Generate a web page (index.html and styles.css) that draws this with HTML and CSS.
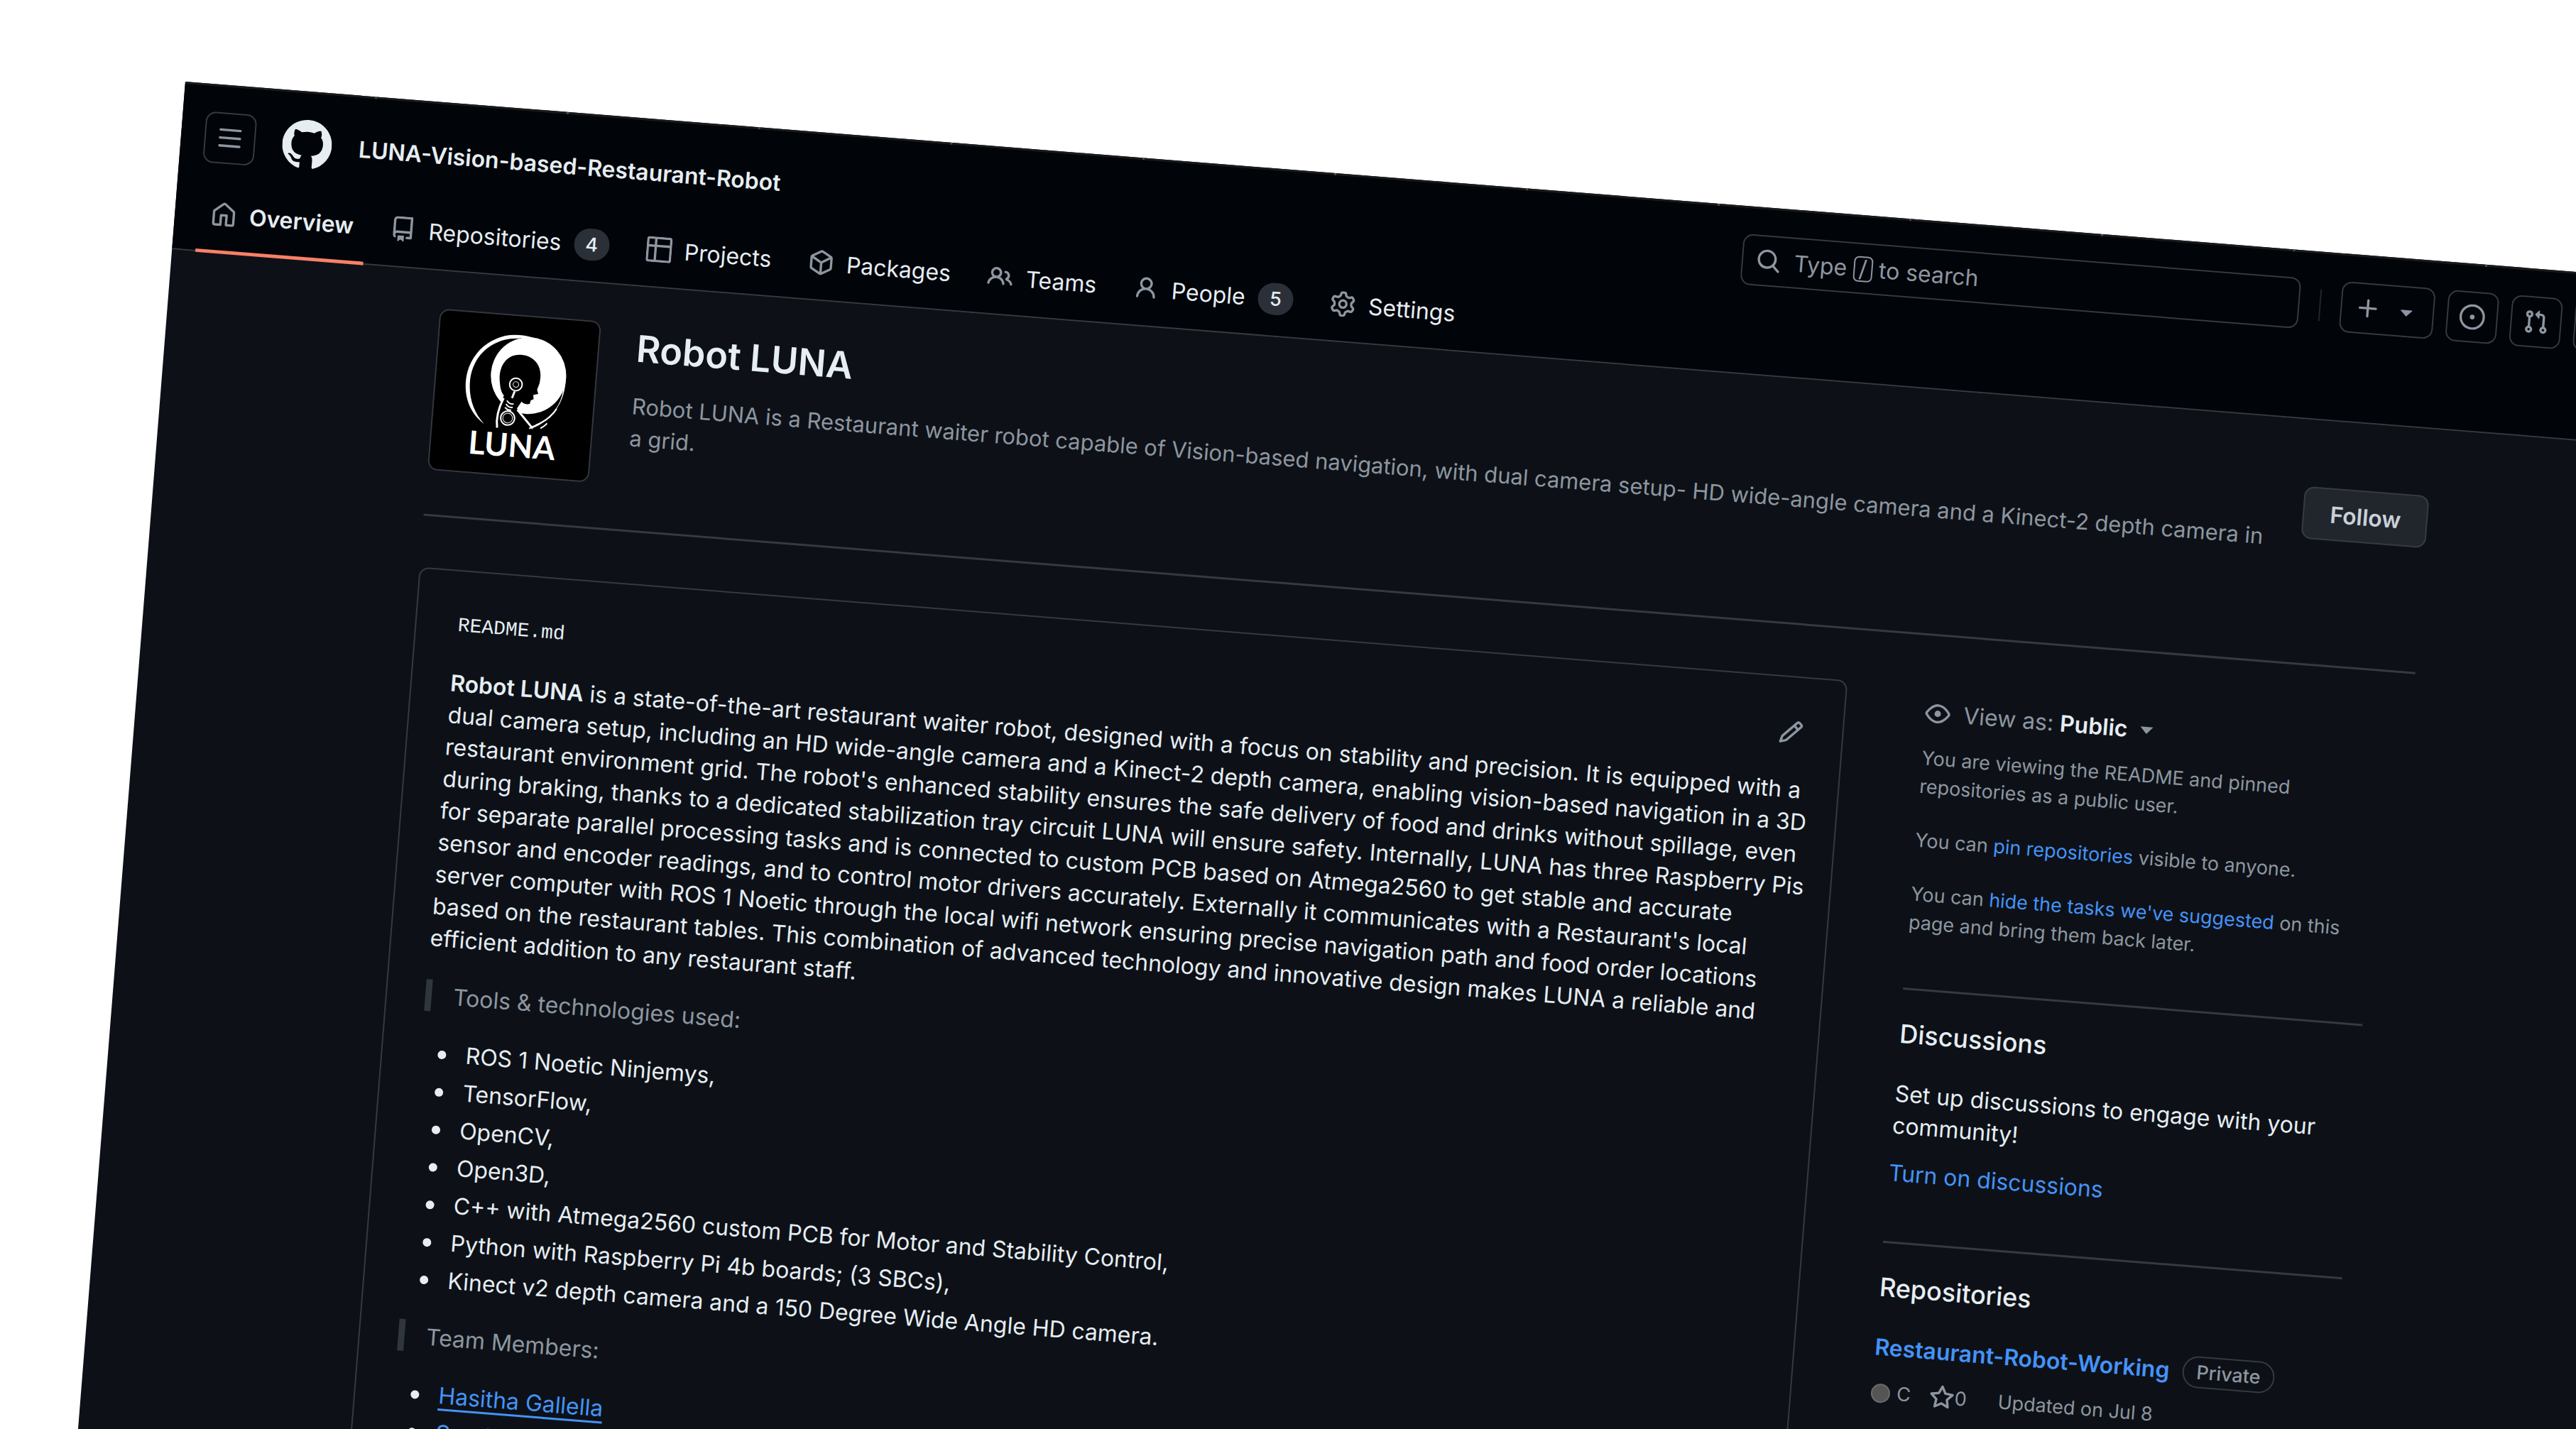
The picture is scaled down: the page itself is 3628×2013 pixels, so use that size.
FILE: index.html
```html
<!DOCTYPE html>
<html lang="en">

<head>
    <meta charset="UTF-8" />
    <meta name="viewport" content="width=device-width, initial-scale=1.0" />
    <title>Robot LUNA</title>
    <link rel="stylesheet" href="styles.css">
</head>

<body>
    <div class="page">
        <div class="page-edge"></div>

        <header class="header">
            <div class="header-top">
                <button class="icon-btn" type="button" aria-label="Open menu">
                    <svg class="icon" viewBox="0 0 16 16"><path d="M1 2.75A.75.75 0 0 1 1.75 2h12.5a.75.75 0 0 1 0 1.5H1.75A.75.75 0 0 1 1 2.75Zm0 5A.75.75 0 0 1 1.75 7h12.5a.75.75 0 0 1 0 1.5H1.75A.75.75 0 0 1 1 7.75ZM1.75 12h12.5a.75.75 0 0 1 0 1.5H1.75a.75.75 0 0 1 0-1.5Z"/></svg>
                </button>
                <a class="logo" href="#" aria-label="Homepage">
                    <svg viewBox="0 0 16 16"><path d="M8 0c4.42 0 8 3.58 8 8a8.013 8.013 0 0 1-5.45 7.59c-.4.08-.55-.17-.55-.38 0-.27.01-1.13.01-2.2 0-.75-.25-1.23-.54-1.48 1.78-.2 3.65-.88 3.65-3.95 0-.88-.31-1.59-.82-2.15.08-.2.36-1.02-.08-2.12 0 0-.67-.22-2.2.82-.64-.18-1.32-.27-2-.27-.68 0-1.36.09-2 .27-1.53-1.03-2.2-.82-2.2-.82-.44 1.1-.16 1.92-.08 2.12-.51.56-.82 1.28-.82 2.15 0 3.06 1.86 3.75 3.64 3.95-.23.2-.44.55-.51 1.07-.46.21-1.61.55-2.33-.66-.15-.24-.6-.83-1.23-.82-.67.01-.27.38.01.53.34.19.73.9.82 1.13.16.45.68 1.31 2.69.94 0 .67.01 1.3.01 1.49 0 .21-.15.45-.55.38A7.995 7.995 0 0 1 0 8c0-4.42 3.58-8 8-8Z"/></svg>
                </a>
                <a class="org-name" href="#">LUNA-Vision-based-Restaurant-Robot</a>

                <button class="search" type="button">
                    <svg class="icon" viewBox="0 0 16 16"><path d="M10.68 11.74a6 6 0 0 1-7.922-8.982 6 6 0 0 1 8.982 7.922l3.04 3.04a.749.749 0 0 1-.326 1.275.749.749 0 0 1-.734-.215ZM11.5 7a4.499 4.499 0 1 0-8.997 0A4.499 4.499 0 0 0 11.5 7Z"/></svg>
                    <span>Type <kbd>/</kbd> to search</span>
                </button>
                <span class="divider"></span>
                <div class="header-actions">
                    <button class="icon-btn create-btn" type="button" aria-label="Create new">
                        <svg class="icon" viewBox="0 0 16 16"><path d="M7.75 2a.75.75 0 0 1 .75.75V7h4.25a.75.75 0 0 1 0 1.5H8.5v4.25a.75.75 0 0 1-1.5 0V8.5H2.75a.75.75 0 0 1 0-1.5H7V2.75A.75.75 0 0 1 7.75 2Z"/></svg>
                        <svg class="icon" viewBox="0 0 16 16"><path d="m4.427 7.427 3.396 3.396a.25.25 0 0 0 .354 0l3.396-3.396A.25.25 0 0 0 11.396 7H4.604a.25.25 0 0 0-.177.427Z"/></svg>
                    </button>
                    <button class="icon-btn" type="button" aria-label="Issues">
                        <svg class="icon" viewBox="0 0 16 16"><path d="M8 9.5a1.5 1.5 0 1 0 0-3 1.5 1.5 0 0 0 0 3Z"/><path d="M8 0a8 8 0 1 1 0 16A8 8 0 0 1 8 0ZM1.5 8a6.5 6.5 0 1 0 13 0 6.5 6.5 0 0 0-13 0Z"/></svg>
                    </button>
                    <button class="icon-btn" type="button" aria-label="Pull requests">
                        <svg class="icon" viewBox="0 0 16 16"><path d="M1.5 3.25a2.25 2.25 0 1 1 3 2.122v5.256a2.251 2.251 0 1 1-1.5 0V5.372A2.25 2.25 0 0 1 1.5 3.25Zm5.677-.177L9.573.677A.25.25 0 0 1 10 .854V2.5h1A2.5 2.5 0 0 1 13.5 5v5.628a2.251 2.251 0 1 1-1.5 0V5a1 1 0 0 0-1-1h-1v1.646a.25.25 0 0 1-.427.177L7.177 3.427a.25.25 0 0 1 0-.354ZM3.75 2.5a.75.75 0 1 0 0 1.5.75.75 0 0 0 0-1.5Zm0 9.5a.75.75 0 1 0 0 1.5.75.75 0 0 0 0-1.5Zm8.25.75a.75.75 0 1 0 1.5 0 .75.75 0 0 0-1.5 0Z"/></svg>
                    </button>
                    <button class="icon-btn" type="button" aria-label="Notifications">
                        <svg class="icon" viewBox="0 0 16 16"><path d="M2.8 2.06A1.75 1.75 0 0 1 4.41 1h7.18c.7 0 1.333.417 1.61 1.06l2.74 6.395c.04.093.06.194.06.295v4.5A1.75 1.75 0 0 1 14.25 15H1.75A1.75 1.75 0 0 1 0 13.25v-4.5c0-.101.02-.202.06-.295Zm1.61.44a.25.25 0 0 0-.23.152L1.887 8H4.75a.75.75 0 0 1 .6.3L6.625 10h2.75l1.275-1.7a.75.75 0 0 1 .6-.3h2.863L11.82 2.652a.25.25 0 0 0-.23-.152Z"/></svg>
                    </button>
                    <a class="user" href="#" aria-label="Your profile"></a>
                </div>
            </div>

            <nav class="nav">
                <a class="nav-item active" href="#">
                    <svg class="icon" viewBox="0 0 16 16"><path d="M6.906.664a1.749 1.749 0 0 1 2.187 0l5.25 4.2c.415.332.657.835.657 1.367v7.019A1.75 1.75 0 0 1 13.25 15h-3.5a.75.75 0 0 1-.75-.75V9H7v5.25a.75.75 0 0 1-.75.75h-3.5A1.75 1.75 0 0 1 1 13.25V6.23c0-.531.242-1.034.657-1.366l5.25-4.2Zm1.25 1.171a.25.25 0 0 0-.312 0l-5.25 4.2a.25.25 0 0 0-.094.196v7.019c0 .138.112.25.25.25H5.5V8.25a.75.75 0 0 1 .75-.75h3.5a.75.75 0 0 1 .75.75v5.25h2.75a.25.25 0 0 0 .25-.25V6.23a.25.25 0 0 0-.094-.195Z"/></svg>
                    Overview
                </a>
                <a class="nav-item" href="#">
                    <svg class="icon" viewBox="0 0 16 16"><path d="M2 2.5A2.5 2.5 0 0 1 4.5 0h8.75a.75.75 0 0 1 .75.75v12.5a.75.75 0 0 1-.75.75h-2.5a.75.75 0 0 1 0-1.5h1.75v-2h-8a1 1 0 0 0-.714 1.7.75.75 0 1 1-1.072 1.05A2.495 2.495 0 0 1 2 11.5Zm10.5-1h-8a1 1 0 0 0-1 1v6.708A2.486 2.486 0 0 1 4.5 9h8ZM5 12.25a.25.25 0 0 1 .25-.25h3.5a.25.25 0 0 1 .25.25v3.25a.25.25 0 0 1-.4.2l-1.45-1.087a.249.249 0 0 0-.3 0L5.4 15.7a.25.25 0 0 1-.4-.2Z"/></svg>
                    Repositories
                    <span class="counter">4</span>
                </a>
                <a class="nav-item" href="#">
                    <svg class="icon" viewBox="0 0 16 16"><path d="M0 1.75C0 .784.784 0 1.75 0h12.5C15.216 0 16 .784 16 1.75v12.5A1.75 1.75 0 0 1 14.25 16H1.75A1.75 1.75 0 0 1 0 14.25ZM6.5 6.5v8h7.75a.25.25 0 0 0 .25-.25V6.5Zm8-1.5V1.75a.25.25 0 0 0-.25-.25H6.5V5Zm-13 1.5v7.75c0 .138.112.25.25.25H5v-8ZM5 5V1.5H1.75a.25.25 0 0 0-.25.25V5Z"/></svg>
                    Projects
                </a>
                <a class="nav-item" href="#">
                    <svg class="icon" viewBox="0 0 16 16"><path d="m8.878.392 5.25 3.045c.54.314.872.89.872 1.514v6.098a1.75 1.75 0 0 1-.872 1.514l-5.25 3.045a1.75 1.75 0 0 1-1.756 0l-5.25-3.045A1.75 1.75 0 0 1 1 11.049V4.951c0-.624.332-1.201.872-1.514L7.122.392a1.75 1.75 0 0 1 1.756 0ZM7.875 1.69l-4.63 2.685L8 7.133l4.755-2.758-4.63-2.685a.248.248 0 0 0-.25 0ZM2.5 5.677v5.372c0 .09.047.171.125.216l4.625 2.683V8.432Zm6.25 8.271 4.625-2.683a.25.25 0 0 0 .125-.216V5.677L8.75 8.432Z"/></svg>
                    Packages
                </a>
                <a class="nav-item" href="#">
                    <svg class="icon" viewBox="0 0 16 16"><path d="M2 5.5a3.5 3.5 0 1 1 5.898 2.549 5.508 5.508 0 0 1 3.034 4.084.75.75 0 1 1-1.482.235 4 4 0 0 0-7.9 0 .75.75 0 0 1-1.482-.236A5.507 5.507 0 0 1 3.102 8.05 3.493 3.493 0 0 1 2 5.5ZM11 4a3.001 3.001 0 0 1 2.22 5.018 5.01 5.01 0 0 1 2.56 3.012.749.749 0 0 1-.885.954.752.752 0 0 1-.549-.514 3.507 3.507 0 0 0-2.522-2.372.75.75 0 0 1-.574-.73v-.352a.75.75 0 0 1 .416-.672A1.5 1.5 0 0 0 11 5.5.75.75 0 0 1 11 4Zm-5.5-.5a2 2 0 1 0-.001 3.999A2 2 0 0 0 5.5 3.5Z"/></svg>
                    Teams
                </a>
                <a class="nav-item" href="#">
                    <svg class="icon" viewBox="0 0 16 16"><path d="M10.561 8.073a6.005 6.005 0 0 1 3.432 5.142.75.75 0 1 1-1.498.07 4.5 4.5 0 0 0-8.99 0 .75.75 0 0 1-1.498-.07 6.004 6.004 0 0 1 3.431-5.142 3.999 3.999 0 1 1 5.123 0ZM10.5 5a2.5 2.5 0 1 0-5 0 2.5 2.5 0 0 0 5 0Z"/></svg>
                    People
                    <span class="counter">5</span>
                </a>
                <a class="nav-item" href="#">
                    <svg class="icon" viewBox="0 0 16 16"><path d="M8 0a8.2 8.2 0 0 1 .701.031C9.444.095 9.99.645 10.16 1.29l.288 1.107c.018.066.079.158.212.224.231.114.454.243.668.386.123.082.233.09.299.071l1.103-.303c.644-.176 1.392.021 1.82.63.27.385.506.792.704 1.218.315.675.111 1.422-.364 1.891l-.814.806c-.049.048-.098.147-.088.294.016.257.016.515 0 .772-.01.147.038.246.088.294l.814.806c.475.469.679 1.216.364 1.891a7.977 7.977 0 0 1-.704 1.217c-.428.61-1.176.807-1.82.63l-1.102-.302c-.067-.019-.177-.011-.3.071a5.909 5.909 0 0 1-.668.386c-.133.066-.194.158-.211.224l-.29 1.106c-.168.646-.715 1.196-1.458 1.26a8.006 8.006 0 0 1-1.402 0c-.743-.064-1.289-.614-1.458-1.26l-.289-1.106c-.018-.066-.079-.158-.212-.224a5.738 5.738 0 0 1-.668-.386c-.123-.082-.233-.09-.299-.071l-1.103.303c-.644.176-1.392-.021-1.82-.63a8.12 8.12 0 0 1-.704-1.218c-.315-.675-.111-1.422.363-1.891l.815-.806c.05-.048.098-.147.088-.294a6.214 6.214 0 0 1 0-.772c.01-.147-.038-.246-.088-.294l-.815-.806C.635 6.045.431 5.298.746 4.623a7.92 7.92 0 0 1 .704-1.217c.428-.61 1.176-.807 1.82-.63l1.102.302c.067.019.177.011.3-.071.214-.143.437-.272.668-.386.133-.066.194-.158.211-.224l.29-1.106C6.009.645 6.556.095 7.299.03 7.53.01 7.764 0 8 0Zm-.571 1.525c-.036.003-.108.036-.137.146l-.289 1.105c-.147.561-.549.967-.998 1.189-.173.086-.34.183-.5.29-.417.278-.97.423-1.529.27l-1.103-.303c-.109-.03-.175.016-.195.045-.22.312-.412.644-.573.99-.014.031-.021.11.059.19l.815.806c.411.406.562.957.53 1.456a4.709 4.709 0 0 0 0 .582c.032.499-.119 1.05-.53 1.456l-.815.806c-.081.08-.073.159-.059.19.162.346.353.677.573.989.02.03.085.076.195.046l1.102-.303c.56-.153 1.113-.008 1.53.27.161.107.328.204.501.29.447.222.85.629.997 1.189l.289 1.105c.029.109.101.143.137.146a6.6 6.6 0 0 0 1.142 0c.036-.003.108-.036.137-.146l.289-1.105c.147-.561.549-.967.998-1.189.173-.086.34-.183.5-.29.417-.278.97-.423 1.529-.27l1.103.303c.109.029.175-.016.195-.045.22-.313.411-.644.573-.99.014-.031.021-.11-.059-.19l-.815-.806c-.411-.406-.562-.957-.53-1.456a4.709 4.709 0 0 0 0-.582c-.032-.499.119-1.05.53-1.456l.815-.806c.081-.08.073-.159.059-.19a6.464 6.464 0 0 0-.573-.989c-.02-.03-.085-.076-.195-.046l-1.102.303c-.56.153-1.113.008-1.53-.27a4.44 4.44 0 0 0-.501-.29c-.447-.222-.85-.629-.997-1.189l-.289-1.105c-.029-.11-.101-.143-.137-.146a6.6 6.6 0 0 0-1.142 0ZM11 8a3 3 0 1 1-6 0 3 3 0 0 1 6 0ZM9.5 8a1.5 1.5 0 1 0-3.001.001A1.5 1.5 0 0 0 9.5 8Z"/></svg>
                    Settings
                </a>
            </nav>
        </header>

        <main class="container">
            <section class="profile">
                <svg class="avatar" viewBox="0 0 228 228" role="img" aria-label="Robot LUNA">
                    <rect width="228" height="228" fill="#000"/>
                    <!-- outer ring and moon -->
                    <path fill="#fff" d="M74 158C52 144 43 122 43 99a71 72 0 0 1 72-72c14 0 24 3 34 8a56 56 0 0 0-36-3C76 34 49 62 49 99c0 24 9 44 25 59Z"/>
                    <ellipse cx="132" cy="84" rx="54" ry="55" fill="#fff"/>
                    <path fill="#fff" d="M185 78c4 33-9 62-38 79l-14 6 9-7c22-9 39-28 41-54Z"/>
                    <path fill="#000" d="M181 112c-5 16-17 31-36 38l-4 2-3-8c19-5 34-14 43-32Z"/>
                    <path fill="none" stroke="#fff" stroke-width="2" d="M176 128c-6 12-16 20-28 26M164 150c-3 4-6 6-9 8"/>
                    <!-- head -->
                    <path fill="#000" d="M92 98c-5-23 6-43 27-43 20 0 32 15 30 34 0 7-3 11-3 15l2 5-7 2 1 6-4 2-1 5c-4 2-9 1-12-2l-8 14-22-3 4-18c-4-4-6-10-7-17Z"/>
                    <path fill="#000" d="M98 120 88 164h54l-26-36Z"/>
                    <g fill="none" stroke="#fff">
                        <circle cx="115" cy="98" r="9" stroke-width="2"/>
                        <circle cx="115" cy="98" r="4" stroke-width="1"/>
                        <path stroke-width="3" d="M114 108l-3 10M99 119c-6 14-9 28-6 43M120 134l24 25"/>
                        <path stroke-width="2" d="M104 122c3 4 7 5 10 4M103 127c3 4 7 5 10 4M102 132c3 3 6 4 9 3"/>
                        <circle cx="107" cy="147" r="10" stroke-width="2"/>
                        <circle cx="107" cy="147" r="7" stroke-width="1"/>
                    </g>
                    <text class="avatar-text" x="116" y="202" text-anchor="middle">LUNA</text>
                </svg>
                <div class="profile-text">
                    <h1>Robot LUNA</h1>
                    <p>Robot LUNA is a Restaurant waiter robot capable of Vision-based navigation, with dual camera setup- HD wide-angle camera and a Kinect-2 depth camera in a grid.</p>
                </div>
                <button class="follow" type="button">Follow</button>
            </section>

            <div class="columns">
                <article class="readme">
                    <div class="readme-bar">
                        <span class="file-name">README.md</span>
                        <a class="edit" href="#" aria-label="Edit README">
                            <svg class="icon" viewBox="0 0 16 16"><path d="M11.013 1.427a1.75 1.75 0 0 1 2.474 0l1.086 1.086a1.75 1.75 0 0 1 0 2.474l-8.61 8.61c-.21.21-.47.364-.756.445l-3.251.93a.75.75 0 0 1-.927-.928l.929-3.25c.081-.286.235-.547.445-.758l8.61-8.61Zm.176 4.823L9.75 4.81l-6.286 6.287a.253.253 0 0 0-.064.108l-.558 1.953 1.953-.558a.253.253 0 0 0 .108-.064Zm1.238-3.763a.25.25 0 0 0-.354 0L10.811 3.75l1.439 1.44 1.263-1.263a.25.25 0 0 0 0-.354Z"/></svg>
                        </a>
                    </div>
                    <p><strong>Robot LUNA</strong> is a state-of-the-art restaurant waiter robot, designed with a focus on stability and precision. It is equipped with a dual camera setup, including an HD wide-angle camera and a Kinect-2 depth camera, enabling vision-based navigation in a 3D restaurant environment grid. The robot's enhanced stability ensures the safe delivery of food and drinks without spillage, even during braking, thanks to a dedicated stabilization tray circuit LUNA will ensure safety. Internally, LUNA has three Raspberry Pis for separate parallel processing tasks and is connected to custom PCB based on Atmega2560 to get stable and accurate sensor and encoder readings, and to control motor drivers accurately. Externally it communicates with a Restaurant's local server computer with ROS 1 Noetic through the local wifi network ensuring precise navigation path and food order locations based on the restaurant tables. This combination of advanced technology and innovative design makes LUNA a reliable and efficient addition to any restaurant staff.</p>
                    <blockquote>Tools &amp; technologies used:</blockquote>
                    <ul>
                        <li>ROS 1 Noetic Ninjemys,</li>
                        <li>TensorFlow,</li>
                        <li>OpenCV,</li>
                        <li>Open3D,</li>
                        <li>C++ with Atmega2560 custom PCB for Motor and Stability Control,</li>
                        <li>Python with Raspberry Pi 4b boards; (3 SBCs),</li>
                        <li>Kinect v2 depth camera and a 150 Degree Wide Angle HD camera.</li>
                    </ul>
                    <blockquote>Team Members:</blockquote>
                    <ul>
                        <li><a href="#">Hasitha Gallella</a></li>
                        <li><a href="#">Sandaruwan</a></li>
                    </ul>
                </article>

                <aside class="sidebar">
                    <button class="view-as" type="button">
                        <svg class="icon" viewBox="0 0 16 16"><path d="M8 2c1.981 0 3.671.992 4.933 2.078 1.27 1.091 2.187 2.345 2.637 3.023a1.62 1.62 0 0 1 0 1.798c-.45.678-1.367 1.932-2.637 3.023C11.67 13.008 9.981 14 8 14c-1.981 0-3.671-.992-4.933-2.078C1.797 10.83.88 9.576.43 8.898a1.62 1.62 0 0 1 0-1.798c.45-.677 1.367-1.931 2.637-3.022C4.33 2.992 6.019 2 8 2ZM1.679 7.932a.12.12 0 0 0 0 .136c.411.622 1.241 1.75 2.366 2.717C5.176 11.758 6.527 12.5 8 12.5c1.473 0 2.825-.742 3.955-1.715 1.124-.967 1.954-2.096 2.366-2.717a.12.12 0 0 0 0-.136c-.412-.621-1.242-1.75-2.366-2.717C10.824 4.242 9.473 3.5 8 3.5c-1.473 0-2.825.742-3.955 1.715-1.124.967-1.954 2.096-2.366 2.717ZM8 10a2 2 0 1 1-.001-3.999A2 2 0 0 1 8 10Z"/></svg>
                        <span>View as: <strong>Public</strong></span>
                        <span class="caret"></span>
                    </button>
                    <div class="notes">
                        <p>You are viewing the README and pinned repositories as a public user.</p>
                        <p>You can <a href="#">pin repositories</a> visible to anyone.</p>
                        <p>You can <a href="#">hide the tasks we've suggested</a> on this page and bring them back later.</p>
                    </div>

                    <section class="block">
                        <h2>Discussions</h2>
                        <p>Set up discussions to engage with your community!</p>
                        <a class="block-link" href="#">Turn on discussions</a>
                    </section>

                    <section class="block">
                        <h2>Repositories</h2>
                        <div class="repo-title">
                            <a href="#">Restaurant-Robot-Working</a>
                            <span class="label">Private</span>
                        </div>
                        <div class="repo-meta">
                            <span class="lang"><span class="lang-dot"></span>C</span>
                            <a class="stars" href="#"><svg class="icon" viewBox="0 0 16 16"><path d="M8 .25a.75.75 0 0 1 .673.418l1.882 3.815 4.21.612a.75.75 0 0 1 .416 1.279l-3.046 2.97.719 4.192a.751.751 0 0 1-1.088.791L8 12.347l-3.766 1.98a.75.75 0 0 1-1.088-.79l.72-4.194L.818 6.374a.75.75 0 0 1 .416-1.28l4.21-.611L7.327.668A.75.75 0 0 1 8 .25Zm0 2.445L6.615 5.5a.75.75 0 0 1-.564.41l-3.097.45 2.24 2.184a.75.75 0 0 1 .216.664l-.528 3.084 2.769-1.456a.75.75 0 0 1 .698 0l2.77 1.456-.53-3.084a.75.75 0 0 1 .216-.664l2.24-2.183-3.096-.45a.75.75 0 0 1-.564-.41L8 2.694Z"/></svg>0</a>
                            <span>Updated on Jul 8</span>
                        </div>
                    </section>
                </aside>
            </div>
        </main>
    </div>
</body>

</html>
```

FILE: styles.css
```css
* {
    box-sizing: border-box;
}

html,
body {
    height: 100%;
}

body {
    margin: 0;
    background-color: #FFFFFF;
    overflow: hidden;
    font-family: Inter, "Open Sans", sans-serif;
    font-size: 32px;
    line-height: 45px;
    color: #E6EDF3;
}

h1,
h2,
p,
ul,
blockquote {
    margin: 0;
}

a {
    color: #4493F8;
    text-decoration: none;
}

button {
    font: inherit;
    color: inherit;
    background: none;
    border: 0;
    padding: 0;
    cursor: pointer;
}

strong {
    font-weight: 600;
}

.icon {
    display: block;
    flex: none;
    width: 36px;
    height: 36px;
    fill: #8D96A0;
}

/* the whole page is tilted around its top left corner */
.page {
    width: 98.7vw;
    min-height: 110vh;
    margin: 115px 0 0 261px;
    background-color: #0D1117;
    transform: rotate(4.55deg);
    transform-origin: 0 0;
}

.page-edge {
    height: 3px;
    background: repeating-linear-gradient(90deg, #1A1A1A 0, #1A1A1A 268px, #4A4A4A 268px, #4A4A4A 271px);
}

/* header */

.header {
    background-color: #010409;
    border-bottom: 2px solid #333A40;
    padding: 36px 38px 0 33px;
}

.header-top {
    display: flex;
    align-items: center;
}

.icon-btn {
    display: flex;
    align-items: center;
    justify-content: center;
    width: 72px;
    height: 72px;
    border: 2px solid #333A40;
    border-radius: 14px;
}

.logo {
    width: 70px;
    height: 70px;
    margin: 0 38px;
}

.logo svg {
    display: block;
    fill: #E6EDF3;
}

.org-name {
    flex: 1;
    color: #E6EDF3;
    font-weight: 600;
}

.search {
    display: flex;
    align-items: center;
    gap: 18px;
    width: 788px;
    height: 72px;
    padding: 0 18px;
    border: 2px solid #333A40;
    border-radius: 14px;
    color: #8D96A0;
}

.search kbd {
    display: inline-block;
    width: 27px;
    font: inherit;
    line-height: 32px;
    text-align: center;
    border: 2px solid #8D96A0;
    border-radius: 7px;
}

.divider {
    width: 2px;
    height: 45px;
    margin: 0 28px;
    background-color: #21262D;
}

.header-actions {
    display: flex;
    gap: 18px;
}

.create-btn {
    width: 132px;
    gap: 18px;
}

.user {
    width: 72px;
    height: 72px;
    border-radius: 50%;
    background-color: #30363D;
}

.nav {
    display: flex;
    gap: 16px;
    margin-top: 20px;
}

.nav-item {
    position: relative;
    display: flex;
    align-items: center;
    gap: 18px;
    height: 104px;
    padding: 0 18px;
    color: #E6EDF3;
}

.nav-item.active {
    font-weight: 600;
}

.nav-item.active::after {
    content: "";
    position: absolute;
    left: 0;
    right: 0;
    bottom: -3px;
    height: 5px;
    background-color: #F78166;
}

.counter {
    min-width: 50px;
    padding: 0 12px;
    border-radius: 24px;
    background-color: #2B3038;
    font-size: 27px;
    font-weight: 500;
    text-align: center;
}

/* profile */

.container {
    max-width: 2814px;
    margin: 0 auto;
    padding-top: 53px;
}

.profile {
    display: flex;
    align-items: flex-start;
    padding-bottom: 62px;
    border-bottom: 3px solid #333A40;
}

.avatar {
    flex: none;
    width: 228px;
    height: 228px;
    border: 2px solid #33373D;
    border-radius: 14px;
}

.avatar-text {
    fill: #FFFFFF;
    font-family: Lato, sans-serif;
    font-size: 46px;
    font-weight: 700;
}

.profile-text {
    flex: 1;
    margin: 5px 45px 0 52px;
}

.profile-text h1 {
    margin-bottom: 28px;
    font-size: 52px;
    font-weight: 600;
    line-height: 60px;
}

.profile-text p {
    color: #8D96A0;
    font-size: 31px;
}

.follow {
    width: 176px;
    height: 74px;
    margin-top: 41px;
    border: 2px solid #363B42;
    border-radius: 14px;
    background-color: #21262D;
    color: #C9D1D9;
    font-weight: 600;
}

.columns {
    display: grid;
    grid-template-columns: minmax(0, 1fr) 684px;
    gap: 112px;
    align-items: start;
    margin-top: 72px;
}

/* readme */

.readme {
    padding: 54px 36px 72px 54px;
    border: 2px solid #333A40;
    border-radius: 14px;
}

.readme-bar {
    display: flex;
    align-items: center;
    justify-content: space-between;
    margin-bottom: 36px;
    padding: 0 18px 0 4px;
}

.file-name {
    font-family: "Liberation Mono", monospace;
    font-size: 28px;
}

.readme blockquote {
    margin: 36px 0;
    padding-left: 30px;
    border-left: 9px solid #30363D;
    color: #8D96A0;
}

.readme ul {
    padding: 0;
    list-style: none;
}

.readme li {
    display: flex;
}

.readme li::before {
    content: "";
    width: 12px;
    height: 12px;
    margin: 18px 27px 0 24px;
    border-radius: 50%;
    background-color: #E6EDF3;
}

.readme li + li {
    margin-top: 8px;
}

.readme li a {
    text-decoration: underline;
    text-decoration-thickness: 3px;
    text-underline-offset: 7px;
}

/* sidebar */

.sidebar {
    padding: 14px 35px 0 0;
}

.view-as {
    display: flex;
    align-items: center;
    gap: 18px;
    color: #8D96A0;
}

.view-as strong {
    color: #E6EDF3;
}

.caret {
    border: 9px solid transparent;
    border-top: 10px solid #8D96A0;
    border-bottom: 0;
}

.notes {
    display: grid;
    gap: 36px;
    margin: 22px 0 72px;
    color: #8D96A0;
    font-size: 27px;
    line-height: 40px;
}

.block {
    padding: 36px 0 74px;
    border-top: 3px solid #333A40;
}

.block h2 {
    margin-bottom: 36px;
    font-size: 36px;
    font-weight: 500;
    line-height: 52px;
}

.block-link {
    display: block;
    margin-top: 22px;
}

.repo-title {
    display: flex;
    align-items: center;
    gap: 18px;
    font-weight: 600;
}

.label {
    padding: 0 18px;
    border: 2px solid #333A40;
    border-radius: 24px;
    color: #8D96A0;
    font-size: 27px;
    font-weight: 500;
    line-height: 41px;
}

.repo-meta {
    display: flex;
    align-items: center;
    gap: 26px;
    margin-top: 22px;
    color: #8D96A0;
    font-size: 27px;
    line-height: 40px;
}

.lang,
.stars {
    display: flex;
    align-items: center;
    color: #8D96A0;
}

.lang {
    gap: 9px;
}

.lang-dot {
    width: 27px;
    height: 27px;
    border: 2px solid #6B6B6B;
    border-radius: 50%;
    background-color: #555555;
}

.stars {
    margin-right: 18px;
}
```
